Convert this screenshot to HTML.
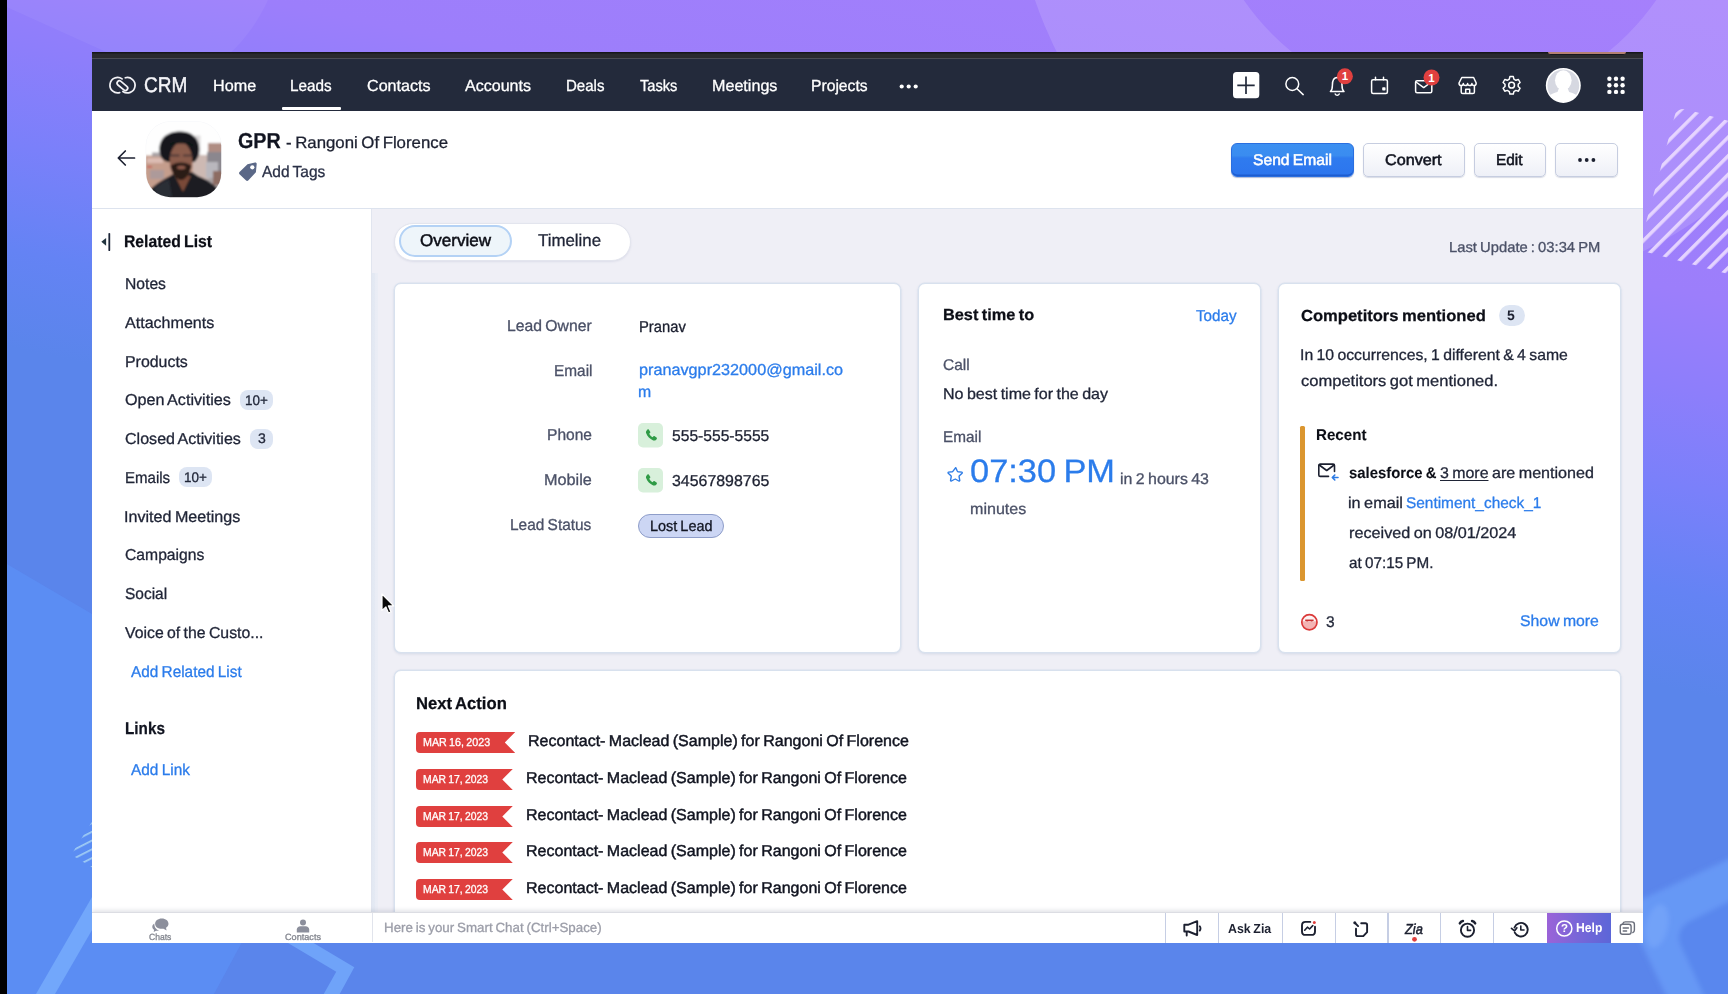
<!DOCTYPE html>
<html lang="en">
<head>
<meta charset="utf-8">
<title>GPR - Rangoni Of Florence - Zoho CRM</title>
<style>
*{box-sizing:border-box;margin:0;padding:0}
html,body{width:1728px;height:994px;overflow:hidden;background:#5b86ee}
body{font-family:"Liberation Sans",sans-serif;text-rendering:geometricPrecision;color:#1c2030;position:relative}
#bg{position:absolute;left:0;top:0;width:1728px;height:994px}
#win,#win div,#win nav,#win header,#win aside,#win main,#win section,#win footer,#win a,#win button{position:absolute}
#win{background:#fff;overflow:hidden}
.t{position:absolute;white-space:nowrap;line-height:1;transform-origin:0 0}
.card{background:#fff;border:1px solid #d8e1ee;border-radius:7px;box-shadow:0 0 0 .5px rgba(216,225,238,.9),0 1px 3px rgba(110,125,165,.2)}
.btn{border:1px solid #c6cde0;border-radius:5px;background:linear-gradient(#ffffff,#eef0f7);box-shadow:0 1px 1px rgba(100,110,150,.25)}
.bd{background:#dde5f3;border-radius:8px}
button{font:inherit;padding:0;margin:0;text-align:left;color:inherit;text-rendering:inherit;letter-spacing:inherit;appearance:none;-webkit-appearance:none}

</style>
</head>
<body>
<svg id="bg" viewBox="0 0 1728 994">
<defs>
<linearGradient id="g0" gradientUnits="userSpaceOnUse" x1="1728" y1="0" x2="1590.300" y2="671.700">
<stop offset="0" stop-color="#a680fc"/><stop offset="0.43" stop-color="#9c7efb"/><stop offset="0.57" stop-color="#8d7efb"/><stop offset="0.71" stop-color="#7a80fa"/><stop offset="0.86" stop-color="#6483f4"/><stop offset="1" stop-color="#5a85eb"/>
</linearGradient>
<pattern id="st1" width="13.200" height="13.200" patternUnits="userSpaceOnUse" patternTransform="rotate(-60) translate(0 4)"><rect width="13.200" height="3.500" fill="#ebdbff" fill-opacity=".92"/></pattern>
<pattern id="st2" width="7.800" height="7.800" patternUnits="userSpaceOnUse" patternTransform="rotate(-27) translate(0 2)"><rect width="7.800" height="1.700" fill="#a8d4f4" fill-opacity=".9"/></pattern>
<filter id="bl" x="-20%" y="-20%" width="140%" height="140%"><feGaussianBlur stdDeviation="2.500"/></filter>
</defs>
<rect width="1728" height="994" fill="url(#g0)"/>
<path d="M0 0H268C256 26 240 46 222 60H124L0 4z" fill="#fff" fill-opacity=".05"/>
<path d="M1011 -143a439 439 0 0 0 878 0a439 439 0 0 0 -878 0zM1199 -143a251 251 0 0 1 502 0a251 251 0 0 1 -502 0z" fill="#fff" fill-opacity=".13" fill-rule="evenodd"/>
<rect x="1677" y="107" width="120" height="148" rx="9" transform="rotate(15 1677 107)" fill="url(#st1)"/>
<path d="M0 560L92 614L262 900L242 942L214 994H0z" fill="#5b8ff5" fill-opacity=".8"/>
<path d="M92 897L36 994H55L92 930z" fill="#72a7fb"/>
<path d="M200 875.400L354.300 967.200L339.700 994H323.750L336.250 971.700L180 878.800z" fill="#6fa3f9"/>
<path d="M93 820L73 852Q72 855 75 857L93 868z" fill="url(#st2)"/>
<g filter="url(#bl)"><path d="M1740 854L1640 900Q1628 915 1636 932L1668 1000H1740z" fill="#699cf8" fill-opacity=".8"/>
<ellipse cx="1657" cy="926" rx="11" ry="22" fill="#7bacfc" fill-opacity=".55" transform="rotate(12 1657 926)"/>
<path d="M1740 896L1686 923Q1675 934 1681 946L1706 1000H1740z" fill="#5886ed" fill-opacity=".92"/></g>
<rect x="0" y="0" width="7" height="994" fill="#000"/>
</svg>

<div id="win" style="left:92.00px;top:52.00px;width:1551.00px;height:890.50px;">
<div style="position:absolute;left:0.00px;top:0.00px;width:1551.00px;height:6.00px;background:linear-gradient(#121215 0,#1c1c20 1px,#2a2a2e 2.500px,#2a2a2e 100%)"></div>
<div style="position:absolute;left:0.00px;top:6.00px;width:1551.00px;height:1.00px;background:#4a4c54"></div>
<div style="position:absolute;left:1456.00px;top:0.00px;width:78.00px;height:1.80px;background:#b58173;border-radius:0 0 3px 3px"></div>
<div style="position:absolute;left:1458.00px;top:1.80px;width:74.00px;height:1.70px;background:#17181f;border-radius:0 0 3px 3px"></div>
<nav id="nav" style="left:0.00px;top:7.00px;width:1551.00px;height:52.00px;background:#232a3b;color:#fff">
<svg style="position:absolute;left:15.00px;top:14.00px;" width="32" height="24" viewBox="107 73 32 24"><g fill="none" stroke="#f2f2f6" stroke-width="1.700" stroke-linecap="round">
<path d="M119.700 92.600a7.700 7.700 0 1 1 2.400 -13.700"/>
<path d="M125.300 77.800a7.700 7.700 0 1 1 -2.400 13.700"/>
<rect x="116.200" y="83.300" width="12.400" height="4.700" rx="2.350" transform="rotate(40 122.400 85.650)"/></g></svg>
<span class="t" style="left:52.49px;top:16px;font-size:21.3px;transform:scaleX(0.8921);color:#f4f4f8;-webkit-text-stroke:0.45px currentColor;">CRM</span>
<span class="t" style="left:121.14px;top:20px;font-size:16px;transform:scaleX(1.0110);color:#fff;-webkit-text-stroke:0.3px currentColor;">Home</span>
<span class="t" style="left:198.21px;top:20px;font-size:16px;transform:scaleX(0.9557);color:#fff;-webkit-text-stroke:0.3px currentColor;">Leads</span>
<span class="t" style="left:274.84px;top:20px;font-size:16px;transform:scaleX(1.0073);color:#fff;-webkit-text-stroke:0.3px currentColor;">Contacts</span>
<span class="t" style="left:373.30px;top:20px;font-size:16px;transform:scaleX(1.0023);color:#fff;-webkit-text-stroke:0.3px currentColor;">Accounts</span>
<span class="t" style="left:474.22px;top:20px;font-size:16px;transform:scaleX(0.9410);color:#fff;-webkit-text-stroke:0.3px currentColor;">Deals</span>
<span class="t" style="left:547.76px;top:20px;font-size:16px;transform:scaleX(0.9154);color:#fff;-webkit-text-stroke:0.3px currentColor;">Tasks</span>
<span class="t" style="left:619.64px;top:20px;font-size:16px;transform:scaleX(1.0079);color:#fff;-webkit-text-stroke:0.3px currentColor;">Meetings</span>
<span class="t" style="left:719.18px;top:20px;font-size:16px;transform:scaleX(0.9790);color:#fff;-webkit-text-stroke:0.3px currentColor;">Projects</span>
<div style="position:absolute;left:190.00px;top:47.50px;width:59.00px;height:3.50px;background:#fff;border-radius:1px"></div>
<svg style="position:absolute;left:806.00px;top:23.00px;" width="22" height="9" viewBox="0 0 22 9"><circle cx="3.7" cy="4.5" r="2.1" fill="#fff"/><circle cx="10.7" cy="4.5" r="2.1" fill="#fff"/><circle cx="17.7" cy="4.5" r="2.1" fill="#fff"/></svg>
<svg style="position:absolute;left:1132.00px;top:0.00px;" width="419" height="52" viewBox="1224 59 419 52">
<rect x="1233" y="72" width="26.3" height="26.3" rx="3.5" fill="#fff"/>
<path d="M1237.3 85.3h17.4M1246 76.6v17.4" stroke="#232a3b" stroke-width="1.7" fill="none"/>
<g fill="none" stroke="#fff" stroke-width="1.5" stroke-linecap="round" stroke-linejoin="round">
<circle cx="1292.3" cy="84" r="6.4"/><path d="M1297 88.8l6.2 5.8"/>
<path d="M1330.400 91.500c1.700-1.400 2-3 2-6.200 0-4.800 2-7.700 4.800-7.700s4.800 2.900 4.800 7.700c0 3.200.3 4.800 2 6.200z"/><path d="M1335.200 94a2.200 2.200 0 0 0 4 0"/>
<rect x="1371.600" y="79.800" width="15.800" height="13.800" rx="1.500"/><path d="M1375.500 77.300v2.500M1383.500 77.300v2.500"/>
<rect x="1415.600" y="80.700" width="16.200" height="12" rx="1.500"/><path d="M1416 82l7.700 5.600 7.700-5.600"/>
<path d="M1461.800 77.500h11.800l2.600 5.500c0 1.600-1 2.600-2.200 2.600-1.300 0-2.100-1-2.100-2-.1 1-1 2-2.200 2s-2.100-1-2.100-2c-.1 1-1 2-2.200 2s-2.100-1-2.100-2c-.1 1-.9 2-2.100 2-1.300 0-2.200-1-2.200-2.600z"/><path d="M1461.200 86.500v5.500c0 1 .6 1.600 1.600 1.600h10c1 0 1.600-.6 1.600-1.600v-5.500M1465.700 93.500v-4.300h4v4.300"/>
<circle cx="1511.600" cy="85.200" r="2.900"/>
<path d="M1509.900 76.600h3.400l.6 2.500 2 1.200 2.500-.8 1.700 3-1.900 1.700v2.300l1.900 1.700-1.700 3-2.500-.8-2 1.200-.6 2.500h-3.400l-.6-2.500-2-1.200-2.500.8-1.700-3 1.900-1.700v-2.300l-1.900-1.700 1.700-3 2.500.8 2-1.200z"/>
</g>
<rect x="1382.200" y="87.300" width="3.300" height="3.300" rx=".8" fill="#fff"/>
<circle cx="1344.900" cy="76.300" r="8" fill="#e0403f"/>
<circle cx="1431.500" cy="77.500" r="8" fill="#e0403f"/>
<text x="1344.900" y="80.300" font-family="Liberation Sans, sans-serif" font-size="11.500" font-weight="700" fill="#fff" text-anchor="middle">1</text>
<text x="1431.500" y="81.500" font-family="Liberation Sans, sans-serif" font-size="11.500" font-weight="700" fill="#fff" text-anchor="middle">1</text>
<clipPath id="avc"><circle cx="1563.300" cy="85.400" r="16.500"/></clipPath>
<circle cx="1563.300" cy="85.400" r="17.500" fill="#fff"/>
<circle cx="1563.300" cy="85.400" r="15.900" fill="#d6d8e1"/>
<g clip-path="url(#avc)" fill="#fff"><ellipse cx="1563.300" cy="80.300" rx="8.300" ry="10"/><path d="M1546 104c0-8.500 6-10.500 11.500-12l1.500-4h8.600l1.500 4c5.500 1.500 11.500 3.500 11.500 12z"/></g>
<g fill="#fff">
<circle cx="1609.400" cy="78.700" r="2.200"/><circle cx="1616" cy="78.700" r="2.200"/><circle cx="1622.600" cy="78.700" r="2.200"/>
<circle cx="1609.400" cy="85.300" r="2.200"/><circle cx="1616" cy="85.300" r="2.200"/><circle cx="1622.600" cy="85.300" r="2.200"/>
<circle cx="1609.400" cy="91.900" r="2.200"/><circle cx="1616" cy="91.900" r="2.200"/><circle cx="1622.600" cy="91.900" r="2.200"/>
</g></svg>
</nav>
<header id="hdr" style="left:0.00px;top:59.00px;width:1551.00px;height:98.00px;background:#fff;border-bottom:1px solid #dde3ee">
<svg style="position:absolute;left:24.00px;top:38.00px;" width="20" height="18" viewBox="0 0 20 18"><path d="M18.500 9H2.500M9.300 2L2.300 9l7 7" fill="none" stroke="#1c2030" stroke-width="1.700" stroke-linecap="round" stroke-linejoin="round"/></svg>
<svg style="position:absolute;left:53px;top:10px" width="78" height="78" viewBox="145 121 78 78">
<defs><clipPath id="pc"><rect x="146.200" y="121.800" width="75" height="75.400" rx="24" ry="24"/></clipPath><filter id="pb" x="-10%" y="-10%" width="120%" height="120%"><feGaussianBlur stdDeviation=".9"/></filter></defs>
<rect x="146.200" y="121.800" width="75" height="75.400" rx="24" ry="24" fill="#fdfdfe" stroke="#f3f4f7" stroke-width=".8"/>
<g clip-path="url(#pc)"><g filter="url(#pb)">
<rect x="144" y="120" width="80" height="80" fill="#fefefe"/>
<rect x="144" y="155.500" width="52" height="44" fill="#c59d8c"/>
<rect x="152" y="152.500" width="12" height="4" fill="#a9a3a6"/>
<rect x="147" y="158" width="16" height="5" fill="#dcbcb2"/>
<rect x="147" y="166" width="5" height="1.500" fill="#c8524a"/>
<rect x="150" y="170" width="14" height="9" fill="#ad9a9a"/>
<rect x="196" y="170" width="28" height="30" fill="#a9a0a1"/>
<rect x="195" y="135.500" width="5.500" height="22" fill="#dcd9da"/>
<rect x="193" y="155" width="16" height="24" fill="#cdb9b3"/>
<rect x="208" y="143" width="16" height="12" fill="#b08d83"/>
<rect x="207" y="152" width="17" height="20" fill="#8b878e"/>
<rect x="206" y="162" width="12" height="16" fill="#b9b7bd"/>
<rect x="213" y="171" width="11" height="14" fill="#8d6c62"/>
<path d="M150 199v-9c4-5 11-9 20-14l6-4h16l6 4c8 3 14 7 19 12v11z" fill="#1a1a21"/>
<path d="M154 188c5-4 10-7 15-9l3 18h-14z" fill="#2c2d36"/>
<path d="M175 176l8 16 8-16z" fill="#7a4a39"/>
<path d="M161 157c-2.500-6-2-12 .500-16.500 3-5.500 9-8.500 17.500-9 8-.500 14.500 2.500 17.500 7.500 3 5 3.500 11 2 16.500-1 3-2.500 5-4 6.500h-27c-3-1-5.500-3-6.500-5z" fill="#12131a"/>
<ellipse cx="181" cy="161" rx="11.300" ry="18.500" fill="#8a5c4b"/>
<path d="M168.500 146c3-3.500 8-5 12.500-5s9.500 1.500 12 5c-3-2-8-2.500-12-2.500s-9 .500-12.500 2.500z" fill="#12131a"/>
<path d="M170.500 166c2 8.500 6 14 10.500 14s8.500-5.500 10.500-14c-2.500-2.500-6-3.500-10.500-3.500s-8 1-10.500 3.500z" fill="#2a1a17"/>
<ellipse cx="181.300" cy="167.500" rx="4.300" ry="1.800" fill="#8f5a4c"/>
<path d="M169.500 155.500h10M183 155.500h10" stroke="#3a2f33" stroke-width="1.500" fill="none"/>
</g></g>
</svg>

<span class="t" style="left:146.30px;top:20px;font-size:21.5px;transform:scaleX(0.9171);font-weight:700;color:#111420;-webkit-text-stroke:0.25px currentColor;">GPR</span>
<span class="t" style="left:194.34px;top:24px;font-size:16.5px;word-spacing:-1.07px;transform:scaleX(1.0180);color:#1c2030;-webkit-text-stroke:0.3px currentColor;">- Rangoni Of Florence</span>
<svg style="position:absolute;left:145.00px;top:50.00px;" width="22" height="21" viewBox="0 0 22 21"><path d="M10.500 3.200l7.500-1.700c1-.2 1.800.5 1.700 1.500l-.8 8.300-7.700 8.200c-.6.600-1.500.6-2.100 0l-6.600-6.300c-.6-.6-.6-1.500 0-2.100z" fill="#5b6887"/><circle cx="15.300" cy="6.300" r="2.100" fill="#fff"/></svg>
<span class="t" style="left:170.10px;top:54px;font-size:16px;word-spacing:-1.04px;transform:scaleX(0.9689);color:#2a3046;-webkit-text-stroke:0.3px currentColor;">Add Tags</span>
<button style="left:1139.40px;top:32.00px;width:122.40px;height:34.00px;border:1px solid #2a6fe0;border-radius:6px;background:linear-gradient(#3c90f1 0%,#3a8cf0 36%,#2f7bef 44%,#2c75ee 100%);box-shadow:inset 0 -1.500px 0 #1d5ccf,0 1px 1px rgba(30,60,140,.35);color:#fff">
<span class="t" style="left:21.04px;top:9px;font-size:15.5px;word-spacing:-1.01px;transform:scaleX(1.0092);color:#fff;-webkit-text-stroke:0.55px currentColor;">Send Email</span>
</button>
<button class="btn" style="left:1270.60px;top:32.00px;width:102.40px;height:34.00px;">
<span class="t" style="left:21.82px;top:9px;font-size:15.5px;transform:scaleX(1.0430);color:#10131e;-webkit-text-stroke:0.55px currentColor;">Convert</span>
</button>
<button class="btn" style="left:1382.20px;top:32.00px;width:71.60px;height:34.00px;">
<span class="t" style="left:21.06px;top:9px;font-size:15.5px;transform:scaleX(0.9931);color:#10131e;-webkit-text-stroke:0.55px currentColor;">Edit</span>
</button>
<button class="btn" style="left:1463.00px;top:32.00px;width:63.00px;height:34.00px;">
<svg style="position:absolute;left:21.00px;top:12.00px;" width="20" height="8" viewBox="0 0 20 8"><circle cx="3" cy="4" r="1.900" fill="#1c2030"/><circle cx="9.700" cy="4" r="1.900" fill="#1c2030"/><circle cx="16.400" cy="4" r="1.900" fill="#1c2030"/></svg>
</button>
</header>
<aside id="side" style="left:0.00px;top:157.00px;width:279.50px;height:703.00px;background:#fff;border-right:1px solid #e1e5ef">
<svg style="position:absolute;left:8.00px;top:23.00px;" width="12" height="20" viewBox="0 0 12 20"><path d="M9.300 1.800v16.400" stroke="#1c2538" stroke-width="1.800" stroke-linecap="round" fill="none"/><path d="M6.100 5.900v7.800L1.300 9.800z" fill="#22353f"/></svg>
<span class="t" style="left:32.34px;top:25px;font-size:16.8px;word-spacing:-1.09px;transform:scaleX(0.9363);font-weight:700;color:#0c0e16;-webkit-text-stroke:0.25px currentColor;">Related List</span>
<span class="t" style="left:32.66px;top:68px;font-size:15.8px;transform:scaleX(0.9924);color:#1f2436;-webkit-text-stroke:0.3px currentColor;">Notes</span>
<span class="t" style="left:33.30px;top:107px;font-size:15.8px;transform:scaleX(1.0163);color:#1f2436;-webkit-text-stroke:0.3px currentColor;">Attachments</span>
<span class="t" style="left:32.64px;top:146px;font-size:15.8px;transform:scaleX(1.0072);color:#1f2436;-webkit-text-stroke:0.3px currentColor;">Products</span>
<span class="t" style="left:33.13px;top:184px;font-size:15.8px;word-spacing:-1.03px;transform:scaleX(1.0228);color:#1f2436;-webkit-text-stroke:0.3px currentColor;">Open Activities</span>
<span class="t" style="left:33.13px;top:223px;font-size:15.8px;word-spacing:-1.03px;transform:scaleX(1.0168);color:#1f2436;-webkit-text-stroke:0.3px currentColor;">Closed Activities</span>
<span class="t" style="left:32.71px;top:262px;font-size:15.8px;transform:scaleX(0.9508);color:#1f2436;-webkit-text-stroke:0.3px currentColor;">Emails</span>
<span class="t" style="left:32.37px;top:301px;font-size:15.8px;word-spacing:-1.03px;transform:scaleX(1.0198);color:#1f2436;-webkit-text-stroke:0.3px currentColor;">Invited Meetings</span>
<span class="t" style="left:33.15px;top:339px;font-size:15.8px;transform:scaleX(0.9933);color:#1f2436;-webkit-text-stroke:0.3px currentColor;">Campaigns</span>
<span class="t" style="left:33.16px;top:378px;font-size:15.8px;transform:scaleX(0.9793);color:#1f2436;-webkit-text-stroke:0.3px currentColor;">Social</span>
<span class="t" style="left:33.17px;top:417px;font-size:15.8px;word-spacing:-1.03px;transform:scaleX(1.0010);color:#1f2436;-webkit-text-stroke:0.3px currentColor;">Voice of the Custo...</span>
<div class="bd" style="position:absolute;left:148.10px;top:180.70px;width:33.20px;height:20.00px;"></div>
<span class="t" style="left:153.14px;top:184px;font-size:14px;transform:scaleX(0.9627);color:#1f2436;-webkit-text-stroke:0.3px currentColor;">10+</span>
<div class="bd" style="position:absolute;left:158.20px;top:219.50px;width:23.10px;height:20.00px;"></div>
<span class="t" style="left:166.30px;top:222px;font-size:14px;transform:scaleX(1.0005);color:#1f2436;-webkit-text-stroke:0.3px currentColor;">3</span>
<div class="bd" style="position:absolute;left:86.50px;top:258.30px;width:33.20px;height:20.00px;"></div>
<span class="t" style="left:91.74px;top:261px;font-size:14px;transform:scaleX(0.9627);color:#1f2436;-webkit-text-stroke:0.3px currentColor;">10+</span>
<span class="t" style="left:38.80px;top:456px;font-size:15.8px;word-spacing:-1.03px;transform:scaleX(0.9718);color:#2b7ceb;-webkit-text-stroke:0.3px currentColor;">Add Related List</span>
<span class="t" style="left:32.69px;top:511px;font-size:17px;transform:scaleX(0.8985);font-weight:700;color:#111420;-webkit-text-stroke:0.25px currentColor;">Links</span>
<span class="t" style="left:38.70px;top:554px;font-size:15.8px;word-spacing:-1.03px;transform:scaleX(0.9765);color:#2b7ceb;-webkit-text-stroke:0.3px currentColor;">Add Link</span>
</aside>
<main id="main" style="left:279.50px;top:157.00px;width:1271.50px;height:703.00px;background:#efeff6">
<div style="position:absolute;left:0.00px;top:63.50px;width:6.50px;height:640.00px;background:linear-gradient(90deg,#e2e8f2 0,#e4e9f3 45%,#e9ecf5 55%,#eaedf5 100%)"></div>
<div id="tabs" style="left:22.50px;top:13.50px;width:237.00px;height:38.00px;background:#fff;border:1px solid #e3e5ee;border-radius:19px;box-shadow:0 1px 2px rgba(120,130,170,.15)">
<div style="position:absolute;left:4.00px;top:1.80px;width:112.50px;height:31.50px;background:#eef5fa;border:2px solid #b4d2f5;border-radius:16px"></div>
<span class="t" style="left:24.85px;top:8.5px;font-size:17px;transform:scaleX(1.0021);color:#0c0e16;-webkit-text-stroke:0.5px currentColor;">Overview</span>
<span class="t" style="left:143.33px;top:8.5px;font-size:17px;transform:scaleX(0.9904);color:#1f2436;-webkit-text-stroke:0.3px currentColor;">Timeline</span>
</div>
<span class="t" style="left:1077.45px;top:32px;font-size:14.5px;word-spacing:-0.94px;transform:scaleX(1.0189);color:#4b5167;-webkit-text-stroke:0.3px currentColor;">Last Update : 03:34 PM</span>
<section id="lead" class="card" style="left:22.50px;top:74.00px;width:507.00px;height:370.00px;">
<span class="t" style="left:111.85px;top:35px;font-size:15.8px;word-spacing:-1.03px;transform:scaleX(0.9953);color:#4b5167;-webkit-text-stroke:0.3px currentColor;">Lead Owner</span>
<span class="t" style="left:158.68px;top:80px;font-size:15.8px;transform:scaleX(0.9747);color:#4b5167;-webkit-text-stroke:0.3px currentColor;">Email</span>
<span class="t" style="left:151.87px;top:144px;font-size:15.8px;transform:scaleX(0.9848);color:#4b5167;-webkit-text-stroke:0.3px currentColor;">Phone</span>
<span class="t" style="left:149.01px;top:189px;font-size:15.8px;transform:scaleX(1.0282);color:#4b5167;-webkit-text-stroke:0.3px currentColor;">Mobile</span>
<span class="t" style="left:115.28px;top:234px;font-size:15.8px;word-spacing:-1.03px;transform:scaleX(0.9766);color:#4b5167;-webkit-text-stroke:0.3px currentColor;">Lead Status</span>
<span class="t" style="left:243.53px;top:36px;font-size:15.8px;transform:scaleX(0.9352);color:#1c2030;-webkit-text-stroke:0.3px currentColor;">Pranav</span>
<span class="t" style="left:243.67px;top:79px;font-size:15.8px;transform:scaleX(1.0268);color:#2b7ceb;-webkit-text-stroke:0.3px currentColor;">pranavgpr232000@gmail.co</span>
<span class="t" style="left:242.80px;top:101px;font-size:15.8px;transform:scaleX(1.0005);color:#2b7ceb;-webkit-text-stroke:0.3px currentColor;">m</span>
<svg style="position:absolute;left:243.10px;top:139.00px;" width="25" height="24.5" viewBox="0 0 25 24.500"><rect width="25" height="24.500" rx="5" fill="#d8f0db"/><path d="M9.300 6.700c.5-.5 1.200-.4 1.600.1l1.300 1.900c.3.500.2 1-.2 1.400l-.8.700c.8 1.500 1.800 2.600 3.300 3.400l.8-.8c.4-.4 1-.4 1.400-.1l1.800 1.300c.5.400.6 1.100.1 1.600l-.7.700c-.7.700-1.700.9-2.700.5-3.500-1.400-5.800-3.800-7.100-7.300-.3-1-.1-2 .6-2.700z" fill="#2f9b46"/></svg>
<span class="t" style="left:276.88px;top:145px;font-size:15.8px;transform:scaleX(0.9889);color:#1c2030;-webkit-text-stroke:0.3px currentColor;">555-555-5555</span>
<svg style="position:absolute;left:243.10px;top:184.00px;" width="25" height="24.5" viewBox="0 0 25 24.500"><rect width="25" height="24.500" rx="5" fill="#d8f0db"/><path d="M9.300 6.700c.5-.5 1.200-.4 1.600.1l1.300 1.900c.3.500.2 1-.2 1.400l-.8.700c.8 1.500 1.800 2.600 3.300 3.400l.8-.8c.4-.4 1-.4 1.400-.1l1.800 1.300c.5.400.6 1.100.1 1.600l-.7.700c-.7.700-1.700.9-2.700.5-3.500-1.400-5.800-3.800-7.100-7.300-.3-1-.1-2 .6-2.700z" fill="#2f9b46"/></svg>
<span class="t" style="left:276.87px;top:190px;font-size:15.8px;transform:scaleX(1.0071);color:#1c2030;-webkit-text-stroke:0.3px currentColor;">34567898765</span>
<div style="position:absolute;left:243.10px;top:230.00px;width:86.20px;height:23.60px;background:#ccd6f4;border:1px solid #8e9dc9;border-radius:12px"></div>
<span class="t" style="left:255.00px;top:235px;font-size:15px;word-spacing:-0.98px;transform:scaleX(0.9625);color:#111420;-webkit-text-stroke:0.3px currentColor;">Lost Lead</span>
</section>
<section id="besttime" class="card" style="left:546.50px;top:74.00px;width:343.00px;height:370.00px;">
<span class="t" style="left:24.18px;top:24px;font-size:16px;word-spacing:-1.04px;transform:scaleX(1.0183);font-weight:700;color:#0c0e16;-webkit-text-stroke:0.25px currentColor;">Best time to</span>
<span class="t" style="left:277.44px;top:25px;font-size:15.8px;transform:scaleX(0.9627);color:#2b7ceb;-webkit-text-stroke:0.3px currentColor;">Today</span>
<span class="t" style="left:24.25px;top:74px;font-size:15.5px;transform:scaleX(0.9970);color:#4b5167;-webkit-text-stroke:0.3px currentColor;">Call</span>
<span class="t" style="left:23.71px;top:103px;font-size:15.5px;word-spacing:-1.01px;transform:scaleX(1.0347);color:#1f2436;-webkit-text-stroke:0.3px currentColor;">No best time for the day</span>
<span class="t" style="left:23.76px;top:146px;font-size:15.5px;transform:scaleX(0.9890);color:#4b5167;-webkit-text-stroke:0.3px currentColor;">Email</span>
<svg style="position:absolute;left:28.00px;top:181.00px;" width="18" height="17" viewBox="0 0 18 17"><path d="M9 2.600l1.700 3.700c.2.400.5.600.9.700l3.900.5c.6.100.8.800.4 1.200l-2.900 2.700c-.3.300-.4.700-.3 1.100l.7 3.800c.1.600-.5 1-1 .7l-3.400-1.900c-.4-.2-.8-.2-1.100 0l-3.400 1.900c-.5.300-1.100-.1-1-.7l.7-3.800c.1-.400 0-.8-.3-1.100l-2.900-2.700c-.4-.400-.2-1.100.4-1.200l3.900-.5c.4-.100.7-.300.9-.700z" fill="none" stroke="#2c7be5" stroke-width="1.500" stroke-linejoin="round" transform="translate(.3 .2) scale(.93)"/></svg>
<span class="t" style="left:50.98px;top:171px;font-size:32.5px;word-spacing:-2.11px;transform:scaleX(1.0585);color:#2b7ceb;-webkit-text-stroke:0.3px currentColor;">07:30 PM</span>
<span class="t" style="left:201.47px;top:188px;font-size:15.5px;word-spacing:-1.01px;transform:scaleX(1.0273);color:#4b5167;-webkit-text-stroke:0.3px currentColor;">in 2 hours 43</span>
<span class="t" style="left:50.86px;top:218px;font-size:15.5px;transform:scaleX(1.0370);color:#4b5167;-webkit-text-stroke:0.3px currentColor;">minutes</span>
</section>
<section id="competitors" class="card" style="left:906.50px;top:74.00px;width:342.50px;height:370.00px;">
<span class="t" style="left:21.95px;top:25px;font-size:16px;word-spacing:-1.04px;transform:scaleX(1.0349);font-weight:700;color:#0c0e16;-webkit-text-stroke:0.25px currentColor;">Competitors mentioned</span>
<div class="bd" style="position:absolute;left:219.60px;top:21.20px;width:26.20px;height:21.20px;border-radius:10.500px"></div>
<span class="t" style="left:228.10px;top:24px;font-size:14px;transform:scaleX(1.0005);font-weight:700;color:#1c2030;">5</span>
<span class="t" style="left:21.20px;top:64px;font-size:15.5px;word-spacing:-1.01px;transform:scaleX(1.0176);color:#1f2436;-webkit-text-stroke:0.3px currentColor;">In 10 occurrences, 1 different &amp; 4 same</span>
<span class="t" style="left:21.93px;top:90px;font-size:15.5px;word-spacing:-1.01px;transform:scaleX(1.0653);color:#1f2436;-webkit-text-stroke:0.3px currentColor;">competitors got mentioned.</span>
<div style="position:absolute;left:21.30px;top:142.00px;width:5.00px;height:155.00px;background:#db962f;border-radius:1.500px"></div>
<span class="t" style="left:37.22px;top:144px;font-size:15.5px;transform:scaleX(0.9762);font-weight:700;color:#0c0e16;-webkit-text-stroke:0.1px currentColor;">Recent</span>
<svg style="position:absolute;left:38.00px;top:178.00px;" width="23" height="20" viewBox="0 0 23 20"><g fill="none" stroke-linecap="round" stroke-linejoin="round"><path d="M17.500 9.500V3.500c0-.8-.6-1.400-1.400-1.400H3.200c-.8 0-1.400.6-1.400 1.400v9.500c0 .8.6 1.400 1.400 1.400h8.300" stroke="#1c2030" stroke-width="1.600"/><path d="M2.300 3l7.400 5.500 7.400-5.500" stroke="#1c2030" stroke-width="1.600"/><path d="M21 15.500h-5.500M17.800 13l-2.500 2.500 2.500 2.500" stroke="#2c7be5" stroke-width="1.600"/></g></svg>
<span class="t" style="left:69.52px;top:182px;font-size:15.5px;word-spacing:-1.01px;transform:scaleX(0.9596);font-weight:700;color:#0c0e16;-webkit-text-stroke:0.1px currentColor;">salesforce &amp;</span>
<span class="t" style="left:160.86px;top:182px;font-size:15.5px;word-spacing:-1.01px;transform:scaleX(1.0263);color:#1f2436;-webkit-text-stroke:0.3px currentColor;text-decoration:underline;text-underline-offset:2px;">3 more</span>
<span class="t" style="left:212.75px;top:182px;font-size:15.5px;word-spacing:-1.01px;transform:scaleX(1.0395);color:#1f2436;-webkit-text-stroke:0.3px currentColor;">are mentioned</span>
<span class="t" style="left:68.95px;top:212px;font-size:15.5px;word-spacing:-1.01px;transform:scaleX(1.0483);color:#1f2436;-webkit-text-stroke:0.3px currentColor;">in email</span>
<span class="t" style="left:126.95px;top:212px;font-size:15.5px;transform:scaleX(0.9939);color:#2b7ceb;-webkit-text-stroke:0.3px currentColor;">Sentiment_check_1</span>
<span class="t" style="left:69.55px;top:242px;font-size:15.5px;word-spacing:-1.01px;transform:scaleX(1.0462);color:#1f2436;-webkit-text-stroke:0.3px currentColor;">received on 08/01/2024</span>
<span class="t" style="left:69.99px;top:272px;font-size:15.5px;word-spacing:-1.01px;transform:scaleX(0.9838);color:#1f2436;-webkit-text-stroke:0.3px currentColor;">at 07:15 PM.</span>
<svg style="position:absolute;left:20.80px;top:328.50px;" width="19" height="19" viewBox="0 0 19 19"><clipPath id="sadc"><circle cx="9.400" cy="9.300" r="7.600"/></clipPath><circle cx="9.400" cy="9.300" r="7.600" fill="#fdf3f3"/><rect x="0" y="8.300" width="19" height="11" fill="#f3b4b4" clip-path="url(#sadc)"/><circle cx="9.400" cy="9.300" r="7.600" fill="none" stroke="#db3a3a" stroke-width="1.700"/><path d="M5.200 7.300h8.400" stroke="#c63030" stroke-width="1.500" fill="none"/><path d="M5.800 7.600c.4 1.300 2.300 1.300 2.700 0M10.300 7.600c.4 1.300 2.300 1.300 2.700 0" fill="#c63030"/></svg>
<span class="t" style="left:46.87px;top:331px;font-size:15.5px;transform:scaleX(1.0005);color:#1f2436;-webkit-text-stroke:0.3px currentColor;">3</span>
<span class="t" style="left:240.54px;top:330px;font-size:15.5px;word-spacing:-1.01px;transform:scaleX(1.0198);color:#2b7ceb;-webkit-text-stroke:0.3px currentColor;">Show more</span>
</section>
<section id="nextaction" class="card" style="left:22.50px;top:461.00px;width:1226.50px;height:260.00px;">
<span class="t" style="left:21.40px;top:24px;font-size:17px;word-spacing:-1.10px;transform:scaleX(0.9796);font-weight:700;color:#0c0e16;-webkit-text-stroke:0.25px currentColor;">Next Action</span>
<svg style="position:absolute;left:21.00px;top:61.30px;" width="99.3" height="21" viewBox="0 0 99.3 21"><path d="M4 0H99.3L88.8 10.500L99.3 21H4a4 4 0 0 1 -4 -4V4a4 4 0 0 1 4 -4z" fill="#e0403f"/></svg>
<span class="t" style="left:28.18px;top:67px;font-size:11.5px;word-spacing:-0.75px;transform:scaleX(0.9330);color:#fff;-webkit-text-stroke:0.3px currentColor;">MAR 16, 2023</span>
<span class="t" style="left:133.03px;top:63px;font-size:15.8px;word-spacing:-1.03px;transform:scaleX(1.0136);color:#111420;-webkit-text-stroke:0.45px currentColor;">Recontact- Maclead (Sample) for Rangoni Of Florence</span>
<svg style="position:absolute;left:21.00px;top:98.00px;" width="96.8" height="21" viewBox="0 0 96.8 21"><path d="M4 0H96.8L86.3 10.500L96.8 21H4a4 4 0 0 1 -4 -4V4a4 4 0 0 1 4 -4z" fill="#e0403f"/></svg>
<span class="t" style="left:28.21px;top:104px;font-size:11.5px;word-spacing:-0.75px;transform:scaleX(0.9019);color:#fff;-webkit-text-stroke:0.3px currentColor;">MAR 17, 2023</span>
<span class="t" style="left:130.73px;top:100px;font-size:15.8px;word-spacing:-1.03px;transform:scaleX(1.0136);color:#111420;-webkit-text-stroke:0.45px currentColor;">Recontact- Maclead (Sample) for Rangoni Of Florence</span>
<svg style="position:absolute;left:21.00px;top:134.70px;" width="96.8" height="21" viewBox="0 0 96.8 21"><path d="M4 0H96.8L86.3 10.500L96.8 21H4a4 4 0 0 1 -4 -4V4a4 4 0 0 1 4 -4z" fill="#e0403f"/></svg>
<span class="t" style="left:28.21px;top:141px;font-size:11.5px;word-spacing:-0.75px;transform:scaleX(0.9019);color:#fff;-webkit-text-stroke:0.3px currentColor;">MAR 17, 2023</span>
<span class="t" style="left:130.73px;top:137px;font-size:15.8px;word-spacing:-1.03px;transform:scaleX(1.0136);color:#111420;-webkit-text-stroke:0.45px currentColor;">Recontact- Maclead (Sample) for Rangoni Of Florence</span>
<svg style="position:absolute;left:21.00px;top:171.30px;" width="96.8" height="21" viewBox="0 0 96.8 21"><path d="M4 0H96.8L86.3 10.500L96.8 21H4a4 4 0 0 1 -4 -4V4a4 4 0 0 1 4 -4z" fill="#e0403f"/></svg>
<span class="t" style="left:28.21px;top:177px;font-size:11.5px;word-spacing:-0.75px;transform:scaleX(0.9019);color:#fff;-webkit-text-stroke:0.3px currentColor;">MAR 17, 2023</span>
<span class="t" style="left:130.73px;top:173px;font-size:15.8px;word-spacing:-1.03px;transform:scaleX(1.0136);color:#111420;-webkit-text-stroke:0.45px currentColor;">Recontact- Maclead (Sample) for Rangoni Of Florence</span>
<svg style="position:absolute;left:21.00px;top:207.90px;" width="96.8" height="21" viewBox="0 0 96.8 21"><path d="M4 0H96.8L86.3 10.500L96.8 21H4a4 4 0 0 1 -4 -4V4a4 4 0 0 1 4 -4z" fill="#e0403f"/></svg>
<span class="t" style="left:28.21px;top:214px;font-size:11.5px;word-spacing:-0.75px;transform:scaleX(0.9019);color:#fff;-webkit-text-stroke:0.3px currentColor;">MAR 17, 2023</span>
<span class="t" style="left:130.73px;top:210px;font-size:15.8px;word-spacing:-1.03px;transform:scaleX(1.0136);color:#111420;-webkit-text-stroke:0.45px currentColor;">Recontact- Maclead (Sample) for Rangoni Of Florence</span>
</section>
</main>
<footer id="bot" style="left:0.00px;top:860.00px;width:1551.00px;height:30.50px;background:#fff;box-shadow:inset 0 1px 0 #dcdde3,0 -2px 4px rgba(90,95,120,.16)">
<svg style="position:absolute;left:59.00px;top:5.00px;" width="19" height="16" viewBox="0 0 19 16"><path d="M10.800 1.500c3.900 0 6.700 2.300 6.700 5.200 0 1.700-1 3.200-2.500 4.100l.6 2.600-3.100-1.700c-.5.100-1.100.100-1.700.100-3.900 0-6.700-2.200-6.700-5.100s2.800-5.200 6.700-5.200z" fill="#8c8f9c"/><path d="M3.300 6.500c-1.300.8-2 2-2 3.300 0 1.200.7 2.300 1.800 3l-.4 2.200 2.400-1.300c1 .2 2.100.100 3-.2-2.600-.8-4.800-2.700-4.800-7z" fill="#8c8f9c"/></svg>
<span class="t" style="left:57.12px;top:21px;font-size:9px;transform:scaleX(0.9503);color:#83868f;-webkit-text-stroke:0.3px currentColor;">Chats</span>
<svg style="position:absolute;left:204.00px;top:6.50px;" width="14" height="14" viewBox="0 0 14 14"><circle cx="7" cy="3.600" r="3" fill="#8c8f9c"/><path d="M.8 13.500v-3c0-2 1.600-3.300 3.600-3.300h5.200c2 0 3.600 1.300 3.600 3.300v3z" fill="#8c8f9c"/></svg>
<span class="t" style="left:193.39px;top:21px;font-size:9px;transform:scaleX(1.0137);color:#83868f;-webkit-text-stroke:0.3px currentColor;">Contacts</span>
<div style="position:absolute;left:279.50px;top:1.00px;width:1.00px;height:29.00px;background:#e1e4ec"></div>
<span class="t" style="left:292.07px;top:9px;font-size:13.3px;word-spacing:-0.86px;transform:scaleX(1.0031);color:#9b9da8;-webkit-text-stroke:0.3px currentColor;">Here is your Smart Chat (Ctrl+Space)</span>
<div style="position:absolute;left:1072.90px;top:1.00px;width:1.20px;height:29.50px;background:#c6cee4"></div>
<div style="position:absolute;left:1126.00px;top:1.00px;width:1.20px;height:29.50px;background:#c6cee4"></div>
<div style="position:absolute;left:1190.00px;top:1.00px;width:1.20px;height:29.50px;background:#c6cee4"></div>
<div style="position:absolute;left:1242.70px;top:1.00px;width:1.20px;height:29.50px;background:#c6cee4"></div>
<div style="position:absolute;left:1295.40px;top:1.00px;width:1.20px;height:29.50px;background:#c6cee4"></div>
<div style="position:absolute;left:1348.00px;top:1.00px;width:1.20px;height:29.50px;background:#c6cee4"></div>
<div style="position:absolute;left:1400.70px;top:1.00px;width:1.20px;height:29.50px;background:#c6cee4"></div>
<span class="t" style="left:1136.34px;top:10px;font-size:13px;word-spacing:-0.84px;transform:scaleX(0.9523);font-weight:700;color:#1c2030;">Ask Zia</span>
<svg style="position:absolute;left:1073px;top:1px" width="478" height="29" viewBox="1165 913 478 29">
<g fill="none" stroke="#1c2030" stroke-width="1.900" stroke-linecap="round" stroke-linejoin="round">
<path d="M1184.300 924.700h4.200l8.700-3.500v13.800l-8.700-3.500h-4.200zM1186.700 931.700v3.800M1199.800 926.300c.9.900.9 3.300 0 4.200"/>
<path d="M1310.300 921.900h-4.800c-2.100 0-3.500 1.400-3.500 3.500v6c0 2.100 1.400 3.500 3.500 3.500h6c2.100 0 3.500-1.400 3.500-3.500v-4.600"/><path d="M1304.700 930.200l2.700-3 2.200 1.800 3.200-3.400" stroke-width="1.600"/>
<path d="M1361.200 923.200h4.200c1 0 1.700.7 1.700 1.700v7.300l-3.800 3.900h-5.600c-1 0-1.700-.7-1.700-1.700v-5.600M1355 923l3.100 3.100"/>
<circle cx="1467.500" cy="930.200" r="6.600"/><path d="M1467.500 926.500v3.900h3.100" stroke-width="1.600"/><path d="M1459.900 923.300c.6-1.300 1.700-2.100 3-2.300M1475.100 923.300c-.6-1.300-1.700-2.100-3-2.300" stroke-width="2.600"/>
<path d="M1514.500 927.500a6.800 6.800 0 1 1 .3 5.200"/><path d="M1520.800 926v4h3.200" stroke-width="1.600"/><path d="M1511.500 928.300l3 2.600 2.400-3.100" stroke-width="1.700"/>
</g>
<circle cx="1354.800" cy="922.700" r="1.500" fill="#1c2030"/>
<g fill="none" stroke="#6a6e7a" stroke-width="1.400" stroke-linecap="round" stroke-linejoin="round">
<rect x="1620.300" y="924.200" width="10.800" height="10" rx="2.200"/><path d="M1622.800 923.800c.4-1.300 1.300-1.900 2.600-1.900h6.400c1.500 0 2.600 1 2.600 2.600v5.600c0 1.200-.5 2-1.600 2.500M1623.200 928h5.200M1623.200 931h3.400"/>
</g>
<circle cx="1314.300" cy="922.600" r="1.500" fill="#e0403f"/>
<circle cx="1414.500" cy="939.300" r="2.400" fill="#e0403f"/>
</svg>

<div style="position:absolute;left:1454.80px;top:1.00px;width:64.00px;height:29.50px;background:linear-gradient(90deg,#9b63d8,#7a66d8 45%,#5c66d8)"></div>
<svg style="position:absolute;left:1463.00px;top:7.00px;" width="19" height="19" viewBox="0 0 19 19"><circle cx="9.300" cy="9.500" r="7.600" fill="none" stroke="#fff" stroke-width="1.500"/></svg>
<span class="t" style="left:1468.80px;top:12px;font-size:11.5px;transform:scaleX(1.0005);font-weight:700;color:#fff;">?</span>
<span class="t" style="left:1484.18px;top:9px;font-size:13px;transform:scaleX(0.9346);font-weight:700;color:#fff;">Help</span>
<span class="t" style="left:1313.06px;top:11px;font-size:14.5px;transform:scaleX(0.8861);color:#1c2030;-webkit-text-stroke:0.5px currentColor;font-style:italic;">Zia</span>
</footer>
</div>
<svg id="cursor" style="position:absolute;left:379.5px;top:591.5px" width="16" height="24" viewBox="0 0 16 24"><path d="M2 2v16.500l3.900-3.600 2.600 6.100 2.500-1.100-2.600-6h5.300z" fill="#0a0a0a" stroke="#fff" stroke-width="1.200" stroke-linejoin="round"/></svg>
</body>
</html>
